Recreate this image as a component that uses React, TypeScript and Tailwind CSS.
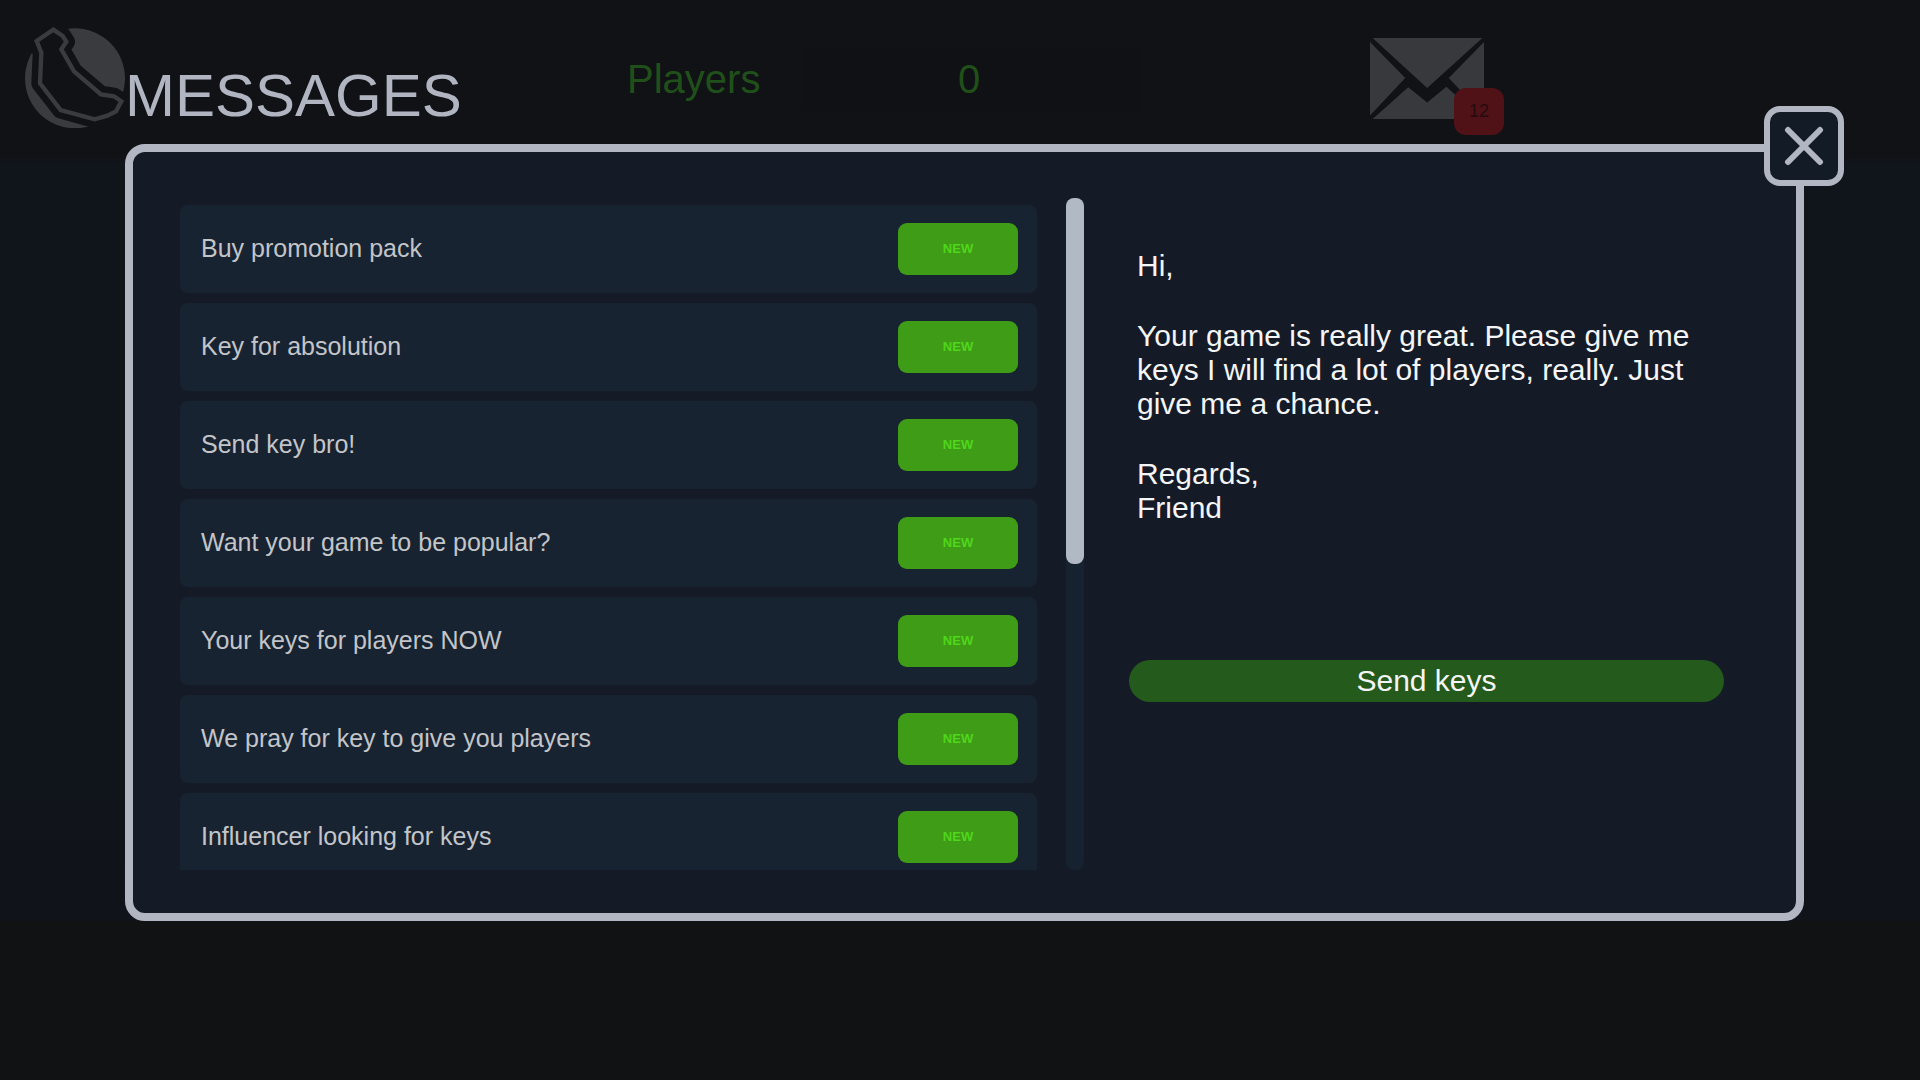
import { useState } from "react";

interface Message {
  id: number;
  title: string;
}

const messages: Message[] = [
  { id: 1, title: "Buy promotion pack" },
  { id: 2, title: "Key for absolution" },
  { id: 3, title: "Send key bro!" },
  { id: 4, title: "Want your game to be popular?" },
  { id: 5, title: "Your keys for players NOW" },
  { id: 6, title: "We pray for key to give you players" },
  { id: 7, title: "Influencer looking for keys" },
];

const banana =
  "M160 89 L188 108 L199 125 L184 148 L222 214 L303 283 L342 289 L364 304 L348 334 L322 347 L284 358 L182 330 L120 250 L124 158 L110 123 Z";

function BananaLogo() {
  return (
    <svg
      viewBox="72 78 303 306"
      className="w-[101px] h-[102px] mt-[26px] shrink-0"
      aria-hidden="true"
    >
      <circle cx="225" cy="235" r="150" fill="#3a3b3f" />
      <path
        d={banana}
        fill="#111216"
        stroke="#111216"
        strokeWidth="52"
        strokeLinejoin="round"
      />
      <path d={banana} fill="none" stroke="#3a3b3f" strokeWidth="13" />
    </svg>
  );
}

function MailIcon() {
  return (
    <svg
      viewBox="0 0 343 243"
      className="w-[114px] h-[81px]"
      fill="#37393d"
      aria-hidden="true"
    >
      <path d="M8 0 H338 L172 150 Z" />
      <path d="M0 12 L106 120 L0 233 Z" />
      <path d="M343 12 L237 120 L343 233 Z" />
      <path d="M8 243 L115 148 L172 194 L230 146 L336 243 Z" />
    </svg>
  );
}

function MessageRow({
  message,
  onSelect,
}: {
  message: Message;
  onSelect: (id: number) => void;
}) {
  return (
    <li className="flex items-center justify-between h-[88px] shrink-0 pl-[21px] pr-[19px] rounded-lg bg-[#182331]">
      <span className="text-[25px] text-[#c3c5c9]">{message.title}</span>
      <button
        type="button"
        onClick={() => onSelect(message.id)}
        className="w-[120px] h-[52px] rounded-[9px] bg-[#3f9c17] text-[13px] font-bold text-[#50d61c]"
      >
        NEW
      </button>
    </li>
  );
}

export default function App() {
  const [open, setOpen] = useState(true);
  const [, setSelected] = useState(1);

  return (
    <div className="min-h-screen bg-[#111214] font-['Liberation_Sans',Arial,sans-serif]">
      <header className="grid grid-cols-[627fr_174fr_569fr_550fr] items-start h-36 bg-[#111216]">
        <div className="flex pl-6">
          <BananaLogo />
          <h1 className="mt-[66px] text-[60px] leading-none text-[#b1b5c1]">
            MESSAGES
          </h1>
        </div>
        <div className="flex items-center h-16 mt-[47px] text-[40px] leading-none text-[#205019]">
          Players
        </div>
        <div className="flex items-center justify-center w-[340px] h-16 mt-[47px] pr-1 bg-[#101115] text-[40px] leading-none text-[#205019]">
          0
        </div>
        <div className="relative w-[114px] mt-[38px]">
          <MailIcon />
          <span className="absolute left-[84px] top-[50px] flex items-center justify-center w-[50px] h-[47px] rounded-xl bg-[#501216] text-[18px] text-[#250b0f]">
            12
          </span>
        </div>
      </header>

      <main className="bg-[linear-gradient(to_bottom,#111216_12px,#10141b_20px,#10141b_640px,#10131a)] pl-[125px] pr-[116px]">
        {open && (
          <section
            aria-label="Messages"
            className="relative flex rounded-[20px] border-8 border-[#b1b6c2] bg-[#141b26] pl-[47px] pr-[72px] pt-[46px] pb-[43px]"
          >
            <ul className="flex flex-col grow-[857] basis-0 gap-[10px] h-[665px] mt-[7px] overflow-hidden">
              {messages.map((message) => (
                <MessageRow
                  key={message.id}
                  message={message}
                  onSelect={setSelected}
                />
              ))}
            </ul>

            <div className="w-[18px] ml-[29px] mr-[45px] rounded-lg bg-[#172230]">
              <div className="h-[366px] rounded-lg bg-[#b0b9c4]" />
            </div>

            <article className="flex flex-col grow-[595] basis-0 pt-[51px] text-[30px] leading-[34px] text-[#f4f5f6]">
              <div className="flex flex-col gap-9 pl-2">
                <p>Hi,</p>
                <p>
                  Your game is really great. Please give me keys I will find a
                  lot of players, really. Just give me a chance.
                </p>
                <p>
                  Regards,
                  <br />
                  Friend
                </p>
              </div>
              <button
                type="button"
                className="h-[42px] mt-[135px] rounded-full bg-[#245a1b]"
              >
                Send keys
              </button>
            </article>

            <button
              type="button"
              aria-label="Close"
              onClick={() => setOpen(false)}
              className="absolute -right-12 -top-[46px] flex items-center justify-center size-20 rounded-2xl border-[6px] border-[#b1b6c2] bg-[#131b26]"
            >
              <svg
                viewBox="0 0 40 40"
                className="w-10 h-10"
                stroke="#b1b6c2"
                strokeWidth="6"
                strokeLinecap="round"
              >
                <path d="M4 4 L36 36 M36 4 L4 36" />
              </svg>
            </button>
          </section>
        )}
      </main>
    </div>
  );
}
